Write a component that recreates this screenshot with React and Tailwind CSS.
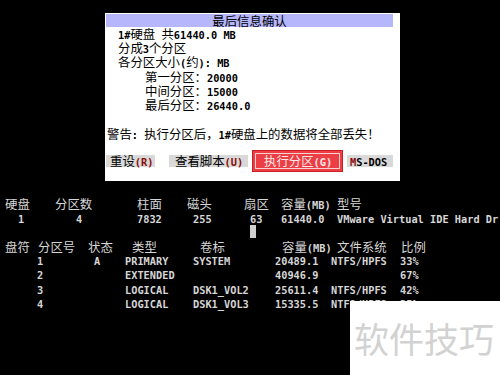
import React from "react";

const CJK = /([\u3000-\u303f\u4e00-\u9fff\uff00-\uffef]+)/;

// mixes half-width bold mono with full-width CJK, like the DOS screen font
const Txt = ({ children, className = "" }) => {
  const parts = String(children).split(CJK);
  return (
    <span className={`whitespace-pre ${className}`}>
      {parts.map((p, i) =>
        p === "" ? null : i % 2 === 1 ? (
          <span key={i} className="font-['Noto_Sans_CJK_SC',sans-serif] text-[12.4px] font-normal">
            {p}
          </span>
        ) : (
          <span key={i} className="font-['DejaVu_Sans_Mono',monospace] text-[10.3px] font-bold">
            {p}
          </span>
        )
      )}
    </span>
  );
};

const partitions = [
  { no: "1", state: "A", type: "PRIMARY", label: "SYSTEM", size: "20489.1", fs: "NTFS/HPFS", pct: "33%" },
  { no: "2", state: "", type: "EXTENDED", label: "", size: "40946.9", fs: "", pct: "67%" },
  { no: "3", state: "", type: "LOGICAL", label: "DSK1_VOL2", size: "25611.4", fs: "NTFS/HPFS", pct: "42%" },
  { no: "4", state: "", type: "LOGICAL", label: "DSK1_VOL3", size: "15335.5", fs: "NTFS/HPFS", pct: "25%" },
];

const Dialog = () => (
  <div className="ml-[105px] flex h-[168px] w-[295px] flex-col bg-white pt-[1px] text-black">
    <div className="ml-[1px] flex h-[13px] w-[287px] items-center justify-center bg-[#b6b6fc] leading-none">
      <Txt>最后信息确认</Txt>
    </div>
    <div className="flex flex-col pl-[13px] leading-[14px]">
      <div className="h-[14.2px]"><Txt>1#硬盘 共61440.0 MB</Txt></div>
      <div className="h-[14.2px]"><Txt>分成3个分区</Txt></div>
      <div className="h-[14.2px]"><Txt>各分区大小(约): MB</Txt></div>
      <div className="h-[14.2px] pl-[27px]"><Txt>第一分区：20000</Txt></div>
      <div className="h-[14.2px] pl-[27px]"><Txt>中间分区：15000</Txt></div>
      <div className="h-[14.2px] pl-[27px]"><Txt>最后分区：26440.0</Txt></div>
    </div>
    <div className="mt-[15px] h-[14px] pl-[2px] leading-[14px]">
      <Txt>警告: 执行分区后，1#硬盘上的数据将全部丢失！</Txt>
    </div>
    <div className="mt-[9px] flex h-[22px] items-center pl-[1px] leading-none">
      <div className="flex h-[12px] w-[49px] items-center bg-[#d9d9d9] pl-[4px]">
        <Txt>重设</Txt>
        <Txt className="text-[#8a0a0a]">(R)</Txt>
      </div>
      <div className="ml-[14px] flex h-[12px] w-[79px] items-center bg-[#d9d9d9] pl-[6px]">
        <Txt>查看脚本</Txt>
        <Txt className="text-[#8a0a0a]">(U)</Txt>
      </div>
      <div className="ml-[4px] h-[22px] w-[91px] border border-[#c81e24] bg-[#ec3f45] p-[2px]">
        <div className="flex h-full items-center border border-[#f8d0d0] pl-[8px] text-[#fde8e8]">
          <Txt>执行分区(G)</Txt>
        </div>
      </div>
      <div className="ml-[4px] flex h-[12px] w-[46px] items-center bg-[#d9d9d9] pl-[3px]">
        <Txt className="text-[#8a0a0a]">M</Txt>
        <Txt>S-DOS</Txt>
      </div>
    </div>
  </div>
);

export default function App() {
  return (
    <div className="relative h-[375px] w-[500px] overflow-hidden bg-black font-['DejaVu_Sans_Mono',monospace] text-[#d6d6d6]">
      <div className="h-[13px]" />
      <Dialog />

      <div className="mt-[16px] flex h-[14px] items-center pl-[5px] leading-none">
        <div className="w-[50px]"><Txt>硬盘</Txt></div>
        <div className="w-[82px]"><Txt>分区数</Txt></div>
        <div className="w-[50px]"><Txt>柱面</Txt></div>
        <div className="w-[57px]"><Txt>磁头</Txt></div>
        <div className="w-[37px]"><Txt>扇区</Txt></div>
        <div className="w-[56px]"><Txt>容量(MB)</Txt></div>
        <div><Txt>型号</Txt></div>
      </div>
      <div className="flex h-[14px] items-center whitespace-nowrap pl-[18px] leading-none">
        <div className="w-[58px] shrink-0"><Txt>1</Txt></div>
        <div className="w-[61px] shrink-0"><Txt>4</Txt></div>
        <div className="w-[56px] shrink-0"><Txt>7832</Txt></div>
        <div className="w-[57px] shrink-0"><Txt>255</Txt></div>
        <div className="w-[31px] shrink-0"><Txt>63</Txt></div>
        <div className="w-[56px] shrink-0"><Txt>61440.0</Txt></div>
        <div className="shrink-0"><Txt>VMware Virtual IDE Hard Dr</Txt></div>
      </div>
      <div className="flex h-[13px]">
        <div className="ml-[250px] h-[13px] w-[6px] bg-[#cfcfcf]" />
      </div>

      <div className="mt-[3px] flex h-[12px] items-center pl-[5px] leading-none">
        <div className="w-[33px]"><Txt>盘符</Txt></div>
        <div className="w-[50px]"><Txt>分区号</Txt></div>
        <div className="w-[44px]"><Txt>状态</Txt></div>
        <div className="w-[68px]"><Txt>类型</Txt></div>
        <div className="w-[82px]"><Txt>卷标</Txt></div>
        <div className="w-[55px]"><Txt>容量(MB)</Txt></div>
        <div className="w-[64px]"><Txt>文件系统</Txt></div>
        <div><Txt>比例</Txt></div>
      </div>
      {partitions.map((p) => (
        <div key={p.no} className="flex h-[14.3px] items-center pl-[37px] leading-none">
          <div className="w-[57px]"><Txt>{p.no}</Txt></div>
          <div className="w-[31px]"><Txt>{p.state}</Txt></div>
          <div className="w-[68px]"><Txt>{p.type}</Txt></div>
          <div className="w-[82px]"><Txt>{p.label}</Txt></div>
          <div className="w-[56px]"><Txt>{p.size}</Txt></div>
          <div className="w-[69px]"><Txt>{p.fs}</Txt></div>
          <div><Txt>{p.pct}</Txt></div>
        </div>
      ))}

      <div className="absolute left-[350px] top-[301px] flex h-[74px] w-[150px] items-center bg-white pb-[1px] pl-[4px]">
        <span className="font-['Noto_Sans_CJK_SC',sans-serif] text-[35px] leading-none text-[#d2d2d2]">
          软件技巧
        </span>
      </div>
    </div>
  );
}
